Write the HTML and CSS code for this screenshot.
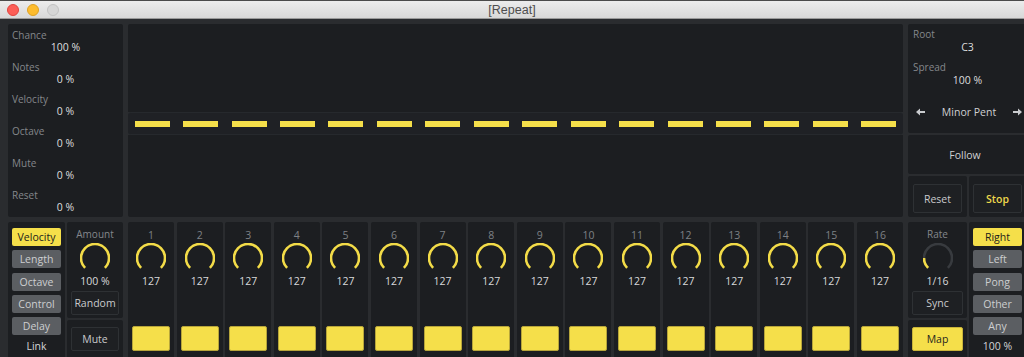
FILE: index.html
```html
<!DOCTYPE html>
<html>
<head>
<meta charset="utf-8">
<title>[Repeat]</title>
<link rel="stylesheet" href="styles.css">
</head>
<body>
<div class="window">
  <div class="titlebar">
    <div class="lights">
      <span class="light red"></span>
      <span class="light yellow"></span>
      <span class="light gray"></span>
    </div>
    <div class="title">[Repeat]</div>
  </div>
  <div class="content">
    <div class="top-row">
      <div class="panel params">
        <div class="param"><div class="lbl">Chance</div><div class="val">100 %</div></div>
        <div class="param"><div class="lbl">Notes</div><div class="val">0 %</div></div>
        <div class="param"><div class="lbl">Velocity</div><div class="val">0 %</div></div>
        <div class="param"><div class="lbl">Octave</div><div class="val">0 %</div></div>
        <div class="param"><div class="lbl">Mute</div><div class="val">0 %</div></div>
        <div class="param"><div class="lbl">Reset</div><div class="val">0 %</div></div>
      </div>
      <div class="seq">
        <div class="seq-upper"></div>
        <div class="seq-strip">
          <span class="dash"></span><span class="dash"></span><span class="dash"></span><span class="dash"></span>
          <span class="dash"></span><span class="dash"></span><span class="dash"></span><span class="dash"></span>
          <span class="dash"></span><span class="dash"></span><span class="dash"></span><span class="dash"></span>
          <span class="dash"></span><span class="dash"></span><span class="dash"></span><span class="dash"></span>
        </div>
        <div class="seq-lower"></div>
      </div>
      <div class="right-top">
        <div class="panel scale">
          <div class="lbl">Root</div>
          <div class="sval">C3</div>
          <div class="lbl spread">Spread</div>
          <div class="sval">100 %</div>
          <div class="scale-row">
            <svg class="arrow" width="9" height="8" viewBox="0 0 9 8"><path d="M0 4 L4 0.5 L4 3 L9 3 L9 5 L4 5 L4 7.5 Z" fill="#c9cbce"/></svg>
            <span class="scale-name">Minor Pent</span>
            <svg class="arrow" width="9" height="8" viewBox="0 0 9 8"><path d="M9 4 L5 0.5 L5 3 L0 3 L0 5 L5 5 L5 7.5 Z" fill="#c9cbce"/></svg>
          </div>
        </div>
        <div class="panel follow">Follow</div>
        <div class="rs-row">
          <div class="panel rs-cell"><div class="obtn">Reset</div></div>
          <div class="panel rs-cell wide"><div class="obtn stop">Stop</div></div>
        </div>
      </div>
    </div>

    <div class="bottom-row">
      <div class="panel modes">
        <div class="tbtn on">Velocity</div>
        <div class="tbtn">Length</div>
        <div class="tbtn">Octave</div>
        <div class="tbtn">Control</div>
        <div class="tbtn">Delay</div>
        <div class="foot">Link</div>
      </div>

      <div class="stack">
        <div class="panel ctl">
          <div class="lbl c">Amount</div>
          <svg class="knob" width="30" height="30" viewBox="0 0 30 30"><path d="M5.1 24.9 A14 14 0 1 1 24.9 24.9" fill="none" stroke="#f3dc48" stroke-width="2.6"/></svg>
          <div class="num">100 %</div>
          <div class="obtn small">Random</div>
        </div>
        <div class="panel ctl-bot"><div class="obtn small">Mute</div></div>
      </div>

      <div class="steps">
        <div class="step"><div class="snum">1</div><svg class="knob" width="30" height="30" viewBox="0 0 30 30"><path d="M5.1 24.9 A14 14 0 1 1 24.9 24.9" fill="none" stroke="#f3dc48" stroke-width="2.6"/></svg><div class="num">127</div><div class="pad"></div></div>
        <div class="step"><div class="snum">2</div><svg class="knob" width="30" height="30" viewBox="0 0 30 30"><path d="M5.1 24.9 A14 14 0 1 1 24.9 24.9" fill="none" stroke="#f3dc48" stroke-width="2.6"/></svg><div class="num">127</div><div class="pad"></div></div>
        <div class="step"><div class="snum">3</div><svg class="knob" width="30" height="30" viewBox="0 0 30 30"><path d="M5.1 24.9 A14 14 0 1 1 24.9 24.9" fill="none" stroke="#f3dc48" stroke-width="2.6"/></svg><div class="num">127</div><div class="pad"></div></div>
        <div class="step"><div class="snum">4</div><svg class="knob" width="30" height="30" viewBox="0 0 30 30"><path d="M5.1 24.9 A14 14 0 1 1 24.9 24.9" fill="none" stroke="#f3dc48" stroke-width="2.6"/></svg><div class="num">127</div><div class="pad"></div></div>
        <div class="step"><div class="snum">5</div><svg class="knob" width="30" height="30" viewBox="0 0 30 30"><path d="M5.1 24.9 A14 14 0 1 1 24.9 24.9" fill="none" stroke="#f3dc48" stroke-width="2.6"/></svg><div class="num">127</div><div class="pad"></div></div>
        <div class="step"><div class="snum">6</div><svg class="knob" width="30" height="30" viewBox="0 0 30 30"><path d="M5.1 24.9 A14 14 0 1 1 24.9 24.9" fill="none" stroke="#f3dc48" stroke-width="2.6"/></svg><div class="num">127</div><div class="pad"></div></div>
        <div class="step"><div class="snum">7</div><svg class="knob" width="30" height="30" viewBox="0 0 30 30"><path d="M5.1 24.9 A14 14 0 1 1 24.9 24.9" fill="none" stroke="#f3dc48" stroke-width="2.6"/></svg><div class="num">127</div><div class="pad"></div></div>
        <div class="step"><div class="snum">8</div><svg class="knob" width="30" height="30" viewBox="0 0 30 30"><path d="M5.1 24.9 A14 14 0 1 1 24.9 24.9" fill="none" stroke="#f3dc48" stroke-width="2.6"/></svg><div class="num">127</div><div class="pad"></div></div>
        <div class="step"><div class="snum">9</div><svg class="knob" width="30" height="30" viewBox="0 0 30 30"><path d="M5.1 24.9 A14 14 0 1 1 24.9 24.9" fill="none" stroke="#f3dc48" stroke-width="2.6"/></svg><div class="num">127</div><div class="pad"></div></div>
        <div class="step"><div class="snum">10</div><svg class="knob" width="30" height="30" viewBox="0 0 30 30"><path d="M5.1 24.9 A14 14 0 1 1 24.9 24.9" fill="none" stroke="#f3dc48" stroke-width="2.6"/></svg><div class="num">127</div><div class="pad"></div></div>
        <div class="step"><div class="snum">11</div><svg class="knob" width="30" height="30" viewBox="0 0 30 30"><path d="M5.1 24.9 A14 14 0 1 1 24.9 24.9" fill="none" stroke="#f3dc48" stroke-width="2.6"/></svg><div class="num">127</div><div class="pad"></div></div>
        <div class="step"><div class="snum">12</div><svg class="knob" width="30" height="30" viewBox="0 0 30 30"><path d="M5.1 24.9 A14 14 0 1 1 24.9 24.9" fill="none" stroke="#f3dc48" stroke-width="2.6"/></svg><div class="num">127</div><div class="pad"></div></div>
        <div class="step"><div class="snum">13</div><svg class="knob" width="30" height="30" viewBox="0 0 30 30"><path d="M5.1 24.9 A14 14 0 1 1 24.9 24.9" fill="none" stroke="#f3dc48" stroke-width="2.6"/></svg><div class="num">127</div><div class="pad"></div></div>
        <div class="step"><div class="snum">14</div><svg class="knob" width="30" height="30" viewBox="0 0 30 30"><path d="M5.1 24.9 A14 14 0 1 1 24.9 24.9" fill="none" stroke="#f3dc48" stroke-width="2.6"/></svg><div class="num">127</div><div class="pad"></div></div>
        <div class="step"><div class="snum">15</div><svg class="knob" width="30" height="30" viewBox="0 0 30 30"><path d="M5.1 24.9 A14 14 0 1 1 24.9 24.9" fill="none" stroke="#f3dc48" stroke-width="2.6"/></svg><div class="num">127</div><div class="pad"></div></div>
        <div class="step"><div class="snum">16</div><svg class="knob" width="30" height="30" viewBox="0 0 30 30"><path d="M5.1 24.9 A14 14 0 1 1 24.9 24.9" fill="none" stroke="#f3dc48" stroke-width="2.6"/></svg><div class="num">127</div><div class="pad"></div></div>
      </div>

      <div class="stack rate">
        <div class="panel ctl">
          <div class="lbl c">Rate</div>
          <svg class="knob" width="30" height="30" viewBox="0 0 30 30"><path d="M5.1 24.9 A14 14 0 1 1 24.9 24.9" fill="none" stroke="#383b3f" stroke-width="2.6"/><path d="M5.1 24.9 A14 14 0 0 1 1 15" fill="none" stroke="#f3dc48" stroke-width="2.6"/></svg>
          <div class="num">1/16</div>
          <div class="obtn small">Sync</div>
        </div>
        <div class="panel ctl-bot"><div class="obtn small map">Map</div></div>
      </div>

      <div class="panel modes dirs">
        <div class="tbtn on">Right</div>
        <div class="tbtn">Left</div>
        <div class="tbtn">Pong</div>
        <div class="tbtn">Other</div>
        <div class="tbtn">Any</div>
        <div class="foot">100 %</div>
      </div>
    </div>
  </div>
</div>
</body>
</html>
```
FILE: styles.css
```css
html, body {
  margin: 0;
  padding: 0;
  background: #2a2c2f;
  overflow: hidden;
}
.window {
  width: 1040px;
  height: 357px;
  overflow: hidden;
  font-family: "Open Sans", "Liberation Sans", sans-serif;
  font-size: 10px;
  color: #d4d5d7;
}
.titlebar {
  border-top: 1px solid #4a4a4a;
  background: linear-gradient(#ececec, #d8d8d8);
  display: flex;
  align-items: center;
  position: relative;
  box-sizing: border-box;
  height: 19px;
  border-bottom: 1px solid #9a9a9a;
}
.lights {
  display: flex;
  gap: 8px;
  padding-left: 7px;
}
.light {
  width: 12px;
  height: 12px;
  border-radius: 50%;
  box-sizing: border-box;
}
.light.red { background: #fc5e57; border: 1px solid #e0443e; }
.light.yellow { background: #fdbc2e; border: 1px solid #dea123; }
.light.gray { background: #d6d6d6; border: 1px solid #c2c2c2; }
.title {
  position: absolute;
  left: 0;
  right: 16px;
  top: 0;
  bottom: 0;
  display: flex;
  align-items: center;
  justify-content: center;
  font-family: "Liberation Sans", sans-serif;
  font-size: 12.5px;
  color: #4e4e4e;
}
.content {
  padding: 5px 0 0 8px;
  display: flex;
  flex-direction: column;
  gap: 5px;
}
.panel {
  background: #1c1e21;
  border-radius: 2px;
  box-sizing: border-box;
}
.top-row {
  display: flex;
  gap: 5px;
  height: 193px;
}
.params {
  width: 115px;
  padding: 5px 0 0 4px;
}
.param {
  margin-bottom: 8px;
}
.lbl {
  color: #84878b;
  line-height: 12px;
  height: 12px;
}
.lbl.c { text-align: center; }
.val {
  line-height: 12px;
  height: 12px;
  text-align: center;
  padding-right: 4px;
  color: #dcdddf;
  font-size: 10.5px;
  font-weight: 500;
}
.seq {
  width: 775px;
  display: flex;
  flex-direction: column;
}
.seq-upper {
  height: 88px;
  background: #1c1e21;
  border-radius: 2px 2px 0 0;
}
.seq-strip {
  height: 23px;
  box-sizing: border-box;
  background: #1f2125;
  border-top: 1px solid #26292d;
  border-bottom: 1px solid #26292d;
  border-radius: 3px;
  display: grid;
  grid-template-columns: repeat(16, 1fr);
  align-items: center;
  justify-items: center;
}
.dash {
  width: 35px;
  height: 6px;
  background: #f5df4a;
}
.seq-lower {
  height: 82px;
  background: #1c1e21;
  border-radius: 0 0 2px 2px;
}
.right-top {
  width: 118px;
  display: flex;
  flex-direction: column;
  gap: 2px;
}
.scale {
  height: 109px;
  padding: 4px 0 0 5px;
}
.sval {
  line-height: 14px;
  height: 14px;
  text-align: center;
  padding-right: 4px;
  color: #dcdddf;
  font-size: 10.5px;
  font-weight: 500;
}
.spread { margin-top: 7px; }
.scale-row {
  margin-top: 18px;
  height: 14px;
  display: flex;
  align-items: center;
  justify-content: space-between;
  padding: 0 4px 0 3px;
  color: #cfd0d2;
  font-size: 10.5px;
  font-weight: 500;
}
.follow {
  height: 39px;
  display: flex;
  align-items: center;
  justify-content: center;
  padding-right: 4px;
  color: #cfd0d2;
  font-size: 10.5px;
  font-weight: 500;
}
.rs-row {
  display: flex;
  gap: 2px;
  height: 41px;
}
.rs-cell {
  width: 59px;
  padding: 8px 5px 4px 5px;
}
.rs-cell.wide { width: 57px; padding: 8px 4px 4px 4px; }
.obtn {
  height: 29px;
  box-sizing: border-box;
  border: 1px solid #2e3134;
  background: #1e2023;
  border-radius: 2px;
  display: flex;
  align-items: center;
  justify-content: center;
  color: #c9cacc;
  font-size: 10.5px;
  font-weight: 500;
}
.obtn.stop { color: #eed84c; font-weight: 600; }
.obtn.small { height: 24px; }
.obtn.map {
  background: #f5df4a;
  border-color: #c9b43a;
  color: #1f1f1f;
}
.bottom-row {
  display: flex;
  height: 140px;
}
.modes {
  width: 57px;
  padding: 6px 4px 0 4px;
  display: flex;
  flex-direction: column;
  gap: 4.3px;
}
.tbtn {
  height: 18px;
  border-radius: 2px;
  background: #5b5e62;
  color: #cdced0;
  display: flex;
  align-items: center;
  justify-content: center;
  font-size: 10.5px;
  font-weight: 500;
}
.tbtn.on {
  background: #f5df4a;
  color: #1c1c1c;
}
.foot {
  text-align: center;
  line-height: 14px;
  color: #d4d5d7;
  font-size: 10.5px;
  font-weight: 500;
}
.stack {
  width: 56px;
  margin-left: 2px;
  display: flex;
  flex-direction: column;
  gap: 2px;
}
.stack.rate {
  width: 59px;
  margin-left: 5px;
}
.dirs { margin-left: 2px; }
.ctl {
  height: 96px;
  padding: 6px 4px 0 4px;
  display: flex;
  flex-direction: column;
  align-items: stretch;
}
.ctl .knob {
  align-self: center;
  margin-top: 3px;
}
.num {
  margin-top: 2px;
  text-align: center;
  line-height: 12px;
  color: #d8d9db;
  font-size: 10.5px;
  font-weight: 500;
}
.ctl .obtn { margin-top: 4px; }
.ctl-bot {
  flex: 1;
  padding: 7px 4px 0 4px;
}
.steps {
  width: 775px;
  margin-left: 5px;
  display: grid;
  grid-template-columns: repeat(16, 1fr);
  gap: 2.5px;
}
.step {
  background: #1c1e21;
  border-radius: 2px;
  display: flex;
  flex-direction: column;
  align-items: center;
  padding-top: 7px;
}
.snum {
  line-height: 12px;
  color: #7e8185;
  font-size: 10.5px;
}
.step .knob { margin-top: 2px; }
.pad {
  margin-top: 39px;
  width: 38px;
  height: 25px;
  box-sizing: border-box;
  background: #f5df4a;
  border: 1px solid #b7a53a;
  border-radius: 2px;
}
```
